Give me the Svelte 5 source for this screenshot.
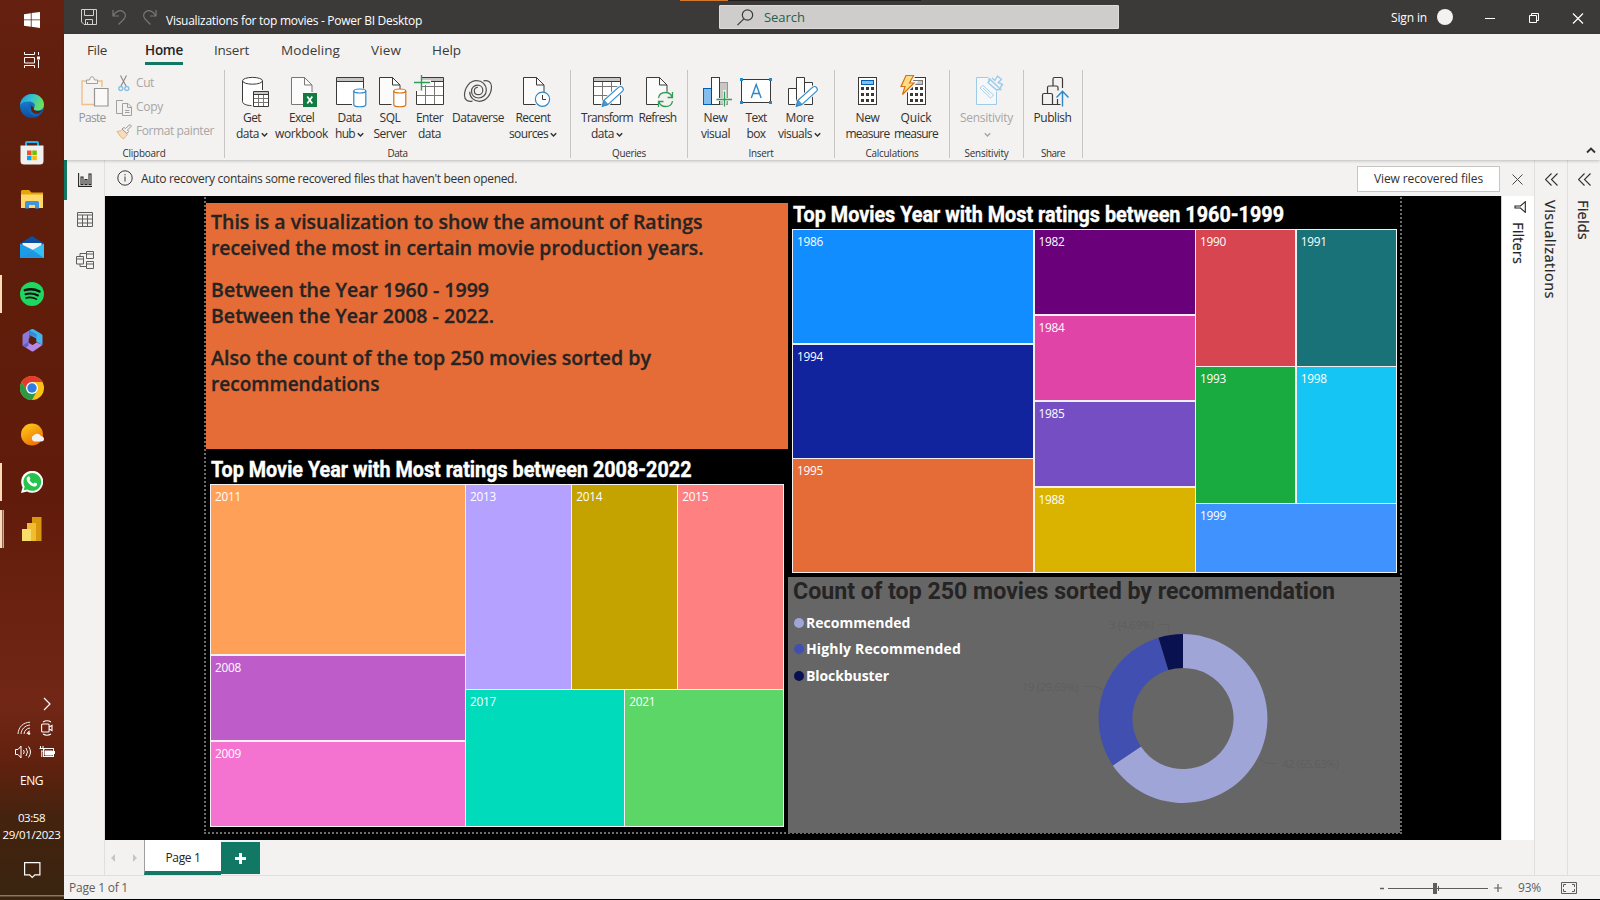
<script>
  const menu = [
    { name: 'File', x: 23, w: 20 },
    { name: 'Home', x: 38, w: 38, active: true },
    { name: 'Insert', x: 31, w: 35 },
    { name: 'Modeling', x: 32, w: 59 },
    { name: 'View', x: 31, w: 30 },
    { name: 'Help', x: 31, w: 29 }
  ];

  const groups = [
    { name: 'Data', lw: 20, pad: 4, width: 346, items: [
      { id: 'get', cx: 252, w: 46, lines: [['Get', 18], ['data', 23]], caret: true },
      { id: 'excel', cx: 302, w: 53, lines: [['Excel', 25], ['workbook', 53]] },
      { id: 'hub', cx: 350, w: 43, lines: [['Data', 24], ['hub', 20]], caret: true },
      { id: 'sql', cx: 390, w: 38, lines: [['SQL', 21], ['Server', 33]] },
      { id: 'enter', cx: 430, w: 41, lines: [['Enter', 27], ['data', 23]] },
      { id: 'dataverse', cx: 478, w: 56, lines: [['Dataverse', 52]] },
      { id: 'recent', cx: 533, w: 54, lines: [['Recent', 35], ['sources', 39]], caret: true }
    ] },
    { name: 'Queries', lw: 34, pad: 7, width: 117, items: [
      { id: 'transform', cx: 607, w: 58, lines: [['Transform', 52], ['data', 23]], caret: true },
      { id: 'refresh', cx: 658, w: 43, lines: [['Refresh', 38]] }
    ] },
    { name: 'Insert', lw: 25, pad: 9, width: 147, items: [
      { id: 'visual', cx: 716, w: 37, lines: [['New', 24], ['visual', 29]] },
      { id: 'textbox', cx: 756, w: 44, lines: [['Text', 21], ['box', 19]] },
      { id: 'more', cx: 800, w: 43, lines: [['More', 28], ['visuals', 34]], caret: true }
    ] },
    { name: 'Calculations', lw: 53, pad: 8, width: 115, items: [
      { id: 'measure', cx: 868, w: 49, lines: [['New', 24], ['measure', 44]] },
      { id: 'quick', cx: 916, w: 48, lines: [['Quick', 31], ['measure', 44]] }
    ] },
    { name: 'Sensitivity', lw: 44, pad: 10, width: 74, items: [
      { id: 'sensitivity', cx: 987, w: 53, lines: [['Sensitivity', 53], ['', 0]], caret: true, off: true }
    ] },
    { name: 'Share', lw: 24, pad: 8, width: 59, items: [
      { id: 'publish', cx: 1053, w: 41, lines: [['Publish', 38]] }
    ] }
  ];

  const modern = [
    { flex: 6, rows: [
      { flex: 1, cells: [['1986', '#118dff']] },
      { flex: 1, cells: [['1994', '#12239e']] },
      { flex: 1, cells: [['1995', '#e66c37']] }
    ] },
    { flex: 4, rows: [
      { flex: 1, cells: [['1982', '#6b007b']] },
      { flex: 1, cells: [['1984', '#e044a7']] },
      { flex: 1, cells: [['1985', '#744ec2']] },
      { flex: 1, cells: [['1988', '#d9b300']] }
    ] },
    { flex: 5, rows: [
      { flex: 2, cells: [['1990', '#d64550'], ['1991', '#197278']] },
      { flex: 2, cells: [['1993', '#1aab40'], ['1998', '#15c6f4']] },
      { flex: 1, cells: [['1999', '#4092ff']] }
    ] }
  ];
  const recent = [
    { flex: 4, rows: [
      { flex: 2, cells: [['2011', '#ffa058']] },
      { flex: 1, cells: [['2008', '#be5dc9']] },
      { flex: 1, cells: [['2009', '#f472d0']] }
    ] },
    { flex: 5, rows: [
      { flex: 3, cells: [['2013', '#b5a1ff'], ['2014', '#c4a200'], ['2015', '#ff8080']] },
      { flex: 2, cells: [['2017', '#00dbbc'], ['2021', '#5bd667']] }
    ] }
  ];

  const slices = [
    { name: 'Recommended', w: 104.5, value: 42, color: '#a0a5d8' },
    { name: 'Highly Recommended', w: 155, value: 19, color: '#414fb1' },
    { name: 'Blockbuster', w: 83, value: 3, color: '#0a1150' }
  ];
  const total = slices.reduce((s, d) => s + d.value, 0);
  function ringPath(index) {
    const start = slices.slice(0, index).reduce((s, d) => s + d.value, 0) / total;
    const end = start + slices[index].value / total;
    const at = (f, r) => `${Math.sin(f * 2 * Math.PI) * r} ${-Math.cos(f * 2 * Math.PI) * r}`;
    const big = end - start > 0.5 ? 1 : 0;
    return `M${at(start, 84.4)}A84.4 84.4 0 ${big} 1 ${at(end, 84.4)}L${at(end, 50.6)}A50.6 50.6 0 ${big} 0 ${at(start, 50.6)}Z`;
  }

  // Spaces the letters so that the text fills the given length along its writing direction.
  function track(node, length) {
    const box = node.getBoundingClientRect();
    const natural = getComputedStyle(node).writingMode === 'vertical-rl' ? box.height : box.width;
    node.style.letterSpacing = `${(length - natural) / node.textContent.length}px`;
  }
  // Condenses or widens the glyphs to the given width.
  function stretch(node, width) {
    const natural = node.getBoundingClientRect().width;
    node.style.transform = `scaleX(${width / natural})`;
  }
</script>

{#snippet T(text, w)}<span class="t" use:track={w}>{text}</span>{/snippet}

{#snippet caret()}<svg class="caret" width="7" height="6" viewBox="0 0 7 6"><path d="M.8 1.3 3.5 4 6.2 1.3" fill="none" stroke="currentColor" stroke-width="1.5" /></svg>{/snippet}

{#snippet doc(x, color)}
  <path d="M{x} 77.5h13l7.5 7.5v19.5h-20.5z" fill="#fff" opacity=".7" />
  <path d="M{x + 12} 104.5h-12v-27h13l7.5 7.5v7M{x + 13} 77.5v7.500h7.500" fill="none" stroke={color} />
{/snippet}

{#snippet drum(x, color)}
  <path d="M{x} 91v13.500c0 3 12 3 12 0v-13.500" fill="#fff" stroke={color} stroke-width="1.2" />
  <ellipse cx={x + 6} cy="91" rx="6" ry="2" fill="#fff" stroke={color} stroke-width="1.2" />
{/snippet}

{#snippet sheet(x)}
  <path d="M{x} 77.500h27v27h-27z" fill="#fff" stroke="none" />
  <path d="M{x} 77.500h27v4h-27z" fill="#c8c6c4" />
  <path d="M{x} 86.500h27M{x} 95.500h27M{x + 9} 81.500v23M{x + 18} 81.500v23" stroke="#797775" />
  <path d="M{x} 77.500h27v27h-27zM{x} 81.500h27" fill="none" stroke="#3b3a39" />
{/snippet}

{#snippet pencil(x)}
  <path d="M{x} 106.300l1.700-6 14.800-13.200q2.300-1.500 3.800.5t0 3.500l-14.800 13.500z" fill="#fff" stroke="#f3f2f1" stroke-width="3" />
  <path d="M{x} 106.300l1.700-6 14.800-13.200q2.300-1.500 3.800.5t0 3.500l-14.800 13.500z" fill="#fff" stroke="#2b88c8" stroke-width="1.100" />
  <path d="M{x} 106.300l1.700-6 4 4.200z" fill="#4a9ad4" stroke="#2b88c8" />
{/snippet}

{#snippet calc(x, quick)}
  <rect x={x} y="77.500" width="18" height="27" fill="#fff" stroke="#3b3a39" />
  <rect x={x + 3} y="80.500" width="12" height="4" fill={quick ? '#c8c6c4' : '#83beec'} stroke={quick ? '#797775' : '#005fb7'} />
  {#each [0, 1, 2] as r}
    {#each [0, 1, 2] as c}
      <rect x={x + 2.5 + c * 5} y={87 + r * 6} width="3" height="3" fill="#3b3a39" />
    {/each}
  {/each}
{/snippet}

{#snippet icon(id, cx)}
  <svg class="big" width="40" height="38" viewBox="{cx - 20} 72 40 38" fill="none">
    {#if id === 'get'}
      <path d="M242.500 81v20c0 3 4 4.500 10 4.500l10-14v-10.500" fill="#fff" />
      <ellipse cx="252.500" cy="80.800" rx="10" ry="3.400" fill="#fff" stroke="#3b3a39" />
      <path d="M242.500 81v20.500c0 2.500 4 4 9 4.100M262.500 81v9" stroke="#3b3a39" />
      <rect x="253.500" y="91.500" width="15" height="15" fill="#fff" />
      <path d="M253.500 91.500h15v3h-15z" fill="#c8c6c4" />
      <path d="M253.500 98.500h15M253.500 102.500h15M258.500 94.500v12M263.500 94.500v12" stroke="#797775" />
      <path d="M253.500 91.500h15v15h-15zM253.500 94.500h15" stroke="#3b3a39" />
    {:else if id === 'excel'}
      {@render doc(291.5, '#797775')}
      <rect x="303" y="93" width="14" height="14" fill="#107c41" />
      <path d="M307.300 96.500l5 7M312.300 96.500l-5 7" stroke="#fff" stroke-width="1.700" />
    {:else if id === 'hub'}
      <rect x="336.500" y="77.500" width="27" height="27" fill="#fff" />
      <path d="M336.500 77.500h27v4h-27z" fill="#c8c6c4" />
      <path d="M352 104.500h-15.500v-27h27v11M336.500 81.500h27" stroke="#3b3a39" />
      {@render drum(353.8, '#2b88c8')}
    {:else if id === 'sql'}
      {@render doc(379.5, '#3b3a39')}
      {@render drum(393.8, '#d87014')}
    {:else if id === 'enter'}
      {@render sheet(416.5)}
      <path d="M413 74h9v17h-9z" fill="#f3f2f1" /><path d="M413 80h18v5h-18z" fill="#f3f2f1" />
      <path d="M421.500 75v15.500M414 82.500h16" stroke="#2f9e56" stroke-width="1.400" />
    {:else if id === 'dataverse'}
      <path d="M472.500 101.200c-4.800.6-8-1.400-8-5.700 0-8.200 5.300-14.800 12-14.800 5.800 0 9.800 3.800 9.800 9.500 0 4.400-3.400 7.800-7.800 7.800-4 0-7-2.800-7-6.800 0-3.500 2.700-6 6-6s5.300 2.300 5.300 5-2 4.500-4.500 4.500-4-1.800-4-4 1.800-3.500 3.500-3.300M483.500 80.800c4.800-.6 8 1.400 8 5.700 0 8.200-5.300 14.800-12 14.800-5.800 0-9.800-3.800-9.800-9.500" stroke="#505050" stroke-width="1.200" />
    {:else if id === 'recent'}
      {@render doc(523.5, '#3b3a39')}
      <circle cx="542.500" cy="99.200" r="7.100" fill="#fff" stroke="#2b88c8" stroke-width="1.200" />
      <path d="M542.500 95v4.500h3.500" stroke="#3b3a39" />
    {:else if id === 'transform'}
      {@render sheet(593.5)}
      {@render pencil(602.3)}
    {:else if id === 'refresh'}
      {@render doc(646.5, '#3b3a39')}
      <circle cx="665.500" cy="99.500" r="8" fill="#f3f2f1" />
      <path d="M658.500 98c.5-3.500 3.500-5.500 7-5.500 3 0 5.500 1.500 6.500 4.500M672.500 101c-.5 3.500-3.500 5.500-7 5.500-3 0-5.500-1.500-6.500-4.500M672.500 92v5.500h-5M658.500 107v-5.500h5" stroke="#2f9e56" stroke-width="1.300" />
    {:else if id === 'visual'}
      <rect x="703.500" y="88.500" width="8" height="16" fill="#83beec" stroke="#005fb7" />
      <rect x="719.500" y="82.500" width="8" height="22" fill="#c8c6c4" stroke="#979593" />
      <rect x="711.500" y="77.500" width="8" height="27" fill="#fff" stroke="#3b3a39" />
      <path d="M724.500 90v16M716 99.500h16" stroke="#f3f2f1" stroke-width="3" />
      <path d="M724.500 91.500v15M716.500 99.500h15.500" stroke="#2f9e56" stroke-width="1.300" />
    {:else if id === 'textbox'}
      <rect x="741.500" y="79.500" width="29" height="23" fill="#fff" stroke="#3b3a39" />
      <path d="M751.300 98l4.900-13.500 4.900 13.500M753 93.500h6.500" stroke="#2b88c8" stroke-width="1.400" />
      {#each [[740, 78], [769, 78], [740, 101], [769, 101]] as p}
        <rect x={p[0]} y={p[1]} width="3" height="3" fill="#1e8bd4" />
      {/each}
    {:else if id === 'more'}
      <path d="M788.500 88.500h8v16h-8zM804.500 82.500h8v22h-8zM796.500 77.500h8v27h-8z" fill="#fff" stroke="#3b3a39" />
      {@render pencil(796.3)}
    {:else if id === 'measure'}
      {@render calc(858.5, false)}
    {:else if id === 'quick'}
      {@render calc(907.5, true)}
      <path d="M906 75.500h7.500l-4 7.500h4.500l-11.500 11.500 2.500-8h-4z" fill="#fde08a" stroke="#f3f2f1" stroke-width="4" />
      <path d="M906 75.500h7.500l-4 7.500h4.500l-11.500 11.500 2.500-8h-4z" fill="#fddc82" stroke="#d87014" stroke-width="1.200" />
    {:else if id === 'sensitivity'}
      <path d="M988 77.500h-11.500v27h20v-13" fill="#f5f7f9" stroke="#9fcbe6" />
      <path d="M980 88l3-2.500 10.500 9.500-3 3zM983 88l7.500 7" fill="#fff" stroke="#9fcbe6" />
      <path d="M989 78.500c1 2 0 3-1 4l8.500 7.500c1.500-.5 2.500-1 4.500-.5z" fill="#f3f7fa" stroke="#9fcbe6" stroke-width="1.600" stroke-linejoin="round" />
      <path d="M992 78l3 2.500 2.500-4.500 4 3.500-3.500 3 4.500 2-2.500 3.500" fill="#f3f7fa" stroke="#9fcbe6" stroke-width="1.400" stroke-linejoin="round" />
    {:else if id === 'publish'}
      <path d="M1042.500 104.500v-9.500q0-1.500 1.500-1.500h7q1.500 0 1.500 1.500v9.500zM1047.500 93.500v-6q0-1.500 1.500-1.500h7.500q1.500 0 1.500 1.500v3M1057.500 99v5M1053 86v-7q0-1.500 1.500-1.500h6.500q1.500 0 1.500 1.500v9M1052 104.500h8.500" stroke="#3b3a39" stroke-width="1.200" />
      <path d="M1062.500 106.500v-15M1056.500 97.500l6-6.200 6 6.200" stroke="#2b88c8" stroke-width="1.400" />
    {/if}
  </svg>
{/snippet}

{#snippet treemap(columns)}
  {#each columns as col}
    <div class="tcol" style="flex-grow:{col.flex}">
      {#each col.rows as row}
        <div class="trow" style="flex-grow:{row.flex}">
          {#each row.cells as cell}
            <div class="tile" style="background:{cell[1]}">{@render T(cell[0], 26)}</div>
          {/each}
        </div>
      {/each}
    </div>
  {/each}
{/snippet}

<div class="screen">
  <aside class="taskbar">
    <div class="slot start">
      <svg width="16" height="16" viewBox="0 0 16 16"><path d="M0 2.200 6.800 1.200v6.300H0zM7.600 1.100 16 0v7.500H7.600zM0 8.300h6.800v6.500L0 13.800zM7.600 8.300H16V16l-8.400-1.200z" fill="#fff" /></svg>
    </div>
    <div class="slot view">
      <svg width="16" height="16" viewBox="0 0 16 16" fill="none" stroke="#fff"><path d="M.5 0v2.500h10V0M.5 16v-2.500h10V16M.5 5.500h10v5.500H.500zM14.500 0v3M14.500 8v8" /><path d="M13 4.500h3v3h-3z" fill="#fff" stroke="none" /></svg>
    </div>
    <div class="slot">
      <svg width="24" height="24" viewBox="0 0 24 24">
        <defs>
          <linearGradient id="eg" x1="0" y1="0" x2="1" y2=".4"><stop offset="0" stop-color="#2390e0" /><stop offset=".5" stop-color="#35c1d0" /><stop offset="1" stop-color="#6be05a" /></linearGradient>
          <linearGradient id="eb" x1="0" y1="0" x2="0" y2="1"><stop offset="0" stop-color="#1c8fe0" /><stop offset="1" stop-color="#0d4d9c" /></linearGradient>
        </defs>
        <circle cx="12" cy="12" r="12" fill="url(#eb)" />
        <path d="M0 11C1 4 6 0 12 0c7 0 12 5 12 10.500 0 4-3 6-6.500 6-3 0-4.500-1-3.500-2.500 2.500-4-1-6.500-5-6.500-4 0-7.500 1-9 3.500z" fill="url(#eg)" />
        <path d="M14 14c-1 1.500.5 3 3.500 3 2 0 4-.5 5-1.300C20.500 19 17.500 20 15 19.500c-4-.7-6-5-3.500-8z" fill="#64200d" />
        <path d="M10 9c-3 3-2.500 9 2 12 2.500 1.500 5 1.500 8-.5-4 1-8-1-9-5-.5-2 0-4 1-5z" fill="#1668b5" />
      </svg>
    </div>
    <div class="slot">
      <svg width="24" height="24" viewBox="0 0 24 24"><path d="M6 5V1.800Q6 1 6.800 1h10.400q.8 0 .8.800V5" fill="none" stroke="#25b0f0" stroke-width="2" /><path d="M.5 4.500h23V20q0 3.500-3.500 3.500H4Q.5 23.500.5 20z" fill="#f0f0f0" /><path d="M7 9.500h4.500V14H7z" fill="#f25022" /><path d="M12.300 9.500h4.500V14h-4.500z" fill="#7fba00" /><path d="M7 14.700h4.500v4.500H7z" fill="#00a4ef" /><path d="M12.300 14.700h4.500v4.500h-4.500z" fill="#ffb900" /></svg>
    </div>
    <div class="slot">
      <svg width="22" height="20" viewBox="0 0 22 20"><path d="M0 1.500Q0 0 1.500 0H8l2.500 2.500H22V18H0z" fill="#e5a50a" /><path d="M0 4.500h22V18H0z" fill="#ffd868" /><path d="M4 18.500v-6q0-1.500 1.500-1.500h11q1.500 0 1.500 1.500v6h-4v-3.500H8v3.500z" fill="#3f95dc" /></svg>
    </div>
    <div class="slot">
      <svg width="24" height="22" viewBox="0 0 24 22"><path d="M0 7.500 12 0l12 7.500v2H0z" fill="#0b4fa0" /><path d="M2.500 7h19v9h-19z" fill="#f4f4f4" /><path d="M0 7.500 13 14 0 22z" fill="#1c9be6" /><path d="M24 7.500 12.500 14 0 22h24z" fill="#35c0f4" /><path d="M0 22l12.500-8L24 22z" fill="#1e96e4" /></svg>
    </div>
    <div class="slot run">
      <svg width="24" height="24" viewBox="0 0 24 24" fill="none" stroke="#111" stroke-linecap="round"><circle cx="12" cy="12" r="12" fill="#1ed760" stroke="none" /><path d="M4.800 8.200c5-1.500 10.500-1 14.800 1.300" stroke-width="2.400" /><path d="M5.500 12.200c4.300-1.200 8.700-.7 12.500 1.300" stroke-width="2" /><path d="M6 15.900c3.700-1 7.300-.5 10.500 1.200" stroke-width="1.600" /></svg>
    </div>
    <div class="slot">
      <svg width="21" height="23" viewBox="0 0 21 23"><path d="M7.500 1.300 1.500 4.700Q.5 5.300.5 6.500v10l3.500 2 3.500-3V8z" fill="#8b78d8" /><path d="M7.500 1.300 9.500.2q1-.4 2 .1l8 4.700q1 .5 1 1.700V16l-6.500-3.500v-3L7.500 6z" fill="#43b4ee" /><path d="M7.500 1.300V8l3-1.500 4 2.500V5z" fill="#2c6fc8" opacity=".6" /><path d="M.5 16.500l6-3.300 4 2.600 4-2.500 6 2.700-9 6.300q-1 .5-2 0z" fill="#b488e6" /><path d="M.5 16.500l6-3.500v3.500l-2.500 2.300z" fill="#3f55b8" opacity=".75" /><path d="M10.500 7.500l3.800 2.200v4L10.500 16l-3.800-2.300v-4z" fill="#5c1d0e" /></svg>
    </div>
    <div class="slot">
      <svg width="24" height="24" viewBox="0 0 24 24"><circle cx="12" cy="12" r="12" fill="#fbc116" /><path d="M12 6H22.400A12 12 0 0 0 1.600 6L7 15z" fill="#e33b2e" /><path d="M1.600 6 7 15l5 2.500L12 24A12 12 0 0 1 1.600 6z" fill="#2a9a48" /><path d="M12 24l5-9-5 3-3 5.600z" fill="#2a9a48" /><circle cx="12" cy="12" r="6" fill="#fff" /><circle cx="12" cy="12" r="4.700" fill="#2f7de1" /></svg>
    </div>
    <div class="slot">
      <svg width="24" height="23" viewBox="0 0 24 23"><defs><linearGradient id="sun" x1="0" y1="0" x2=".6" y2="1"><stop offset="0" stop-color="#ffd21a" /><stop offset="1" stop-color="#ee7208" /></linearGradient></defs><circle cx="12" cy="11.500" r="11" fill="url(#sun)" /><path d="M14 18.500a3.500 3.500 0 0 1 0-6.500 4.500 4.500 0 0 1 7 1q3 .500 3 3t-3 2.500z" fill="#f2f2f2" /></svg>
    </div>
    <div class="slot run">
      <svg width="22" height="22" viewBox="0 0 22 22"><path d="M0 22l1.600-5.800A11 11 0 1 1 6 20.500z" fill="#fff" /><path d="M2.700 19.300l1-3.700A8.900 8.900 0 1 1 6.400 18.400z" fill="#24c34b" /><path d="M7.300 5.500q.9-.4 1.300.4l.8 1.900-.9 1.500q1.200 2.300 3.900 3.500l1.300-1.400 2.500 1.200q.3 2-1.700 2.900c-3 .8-8.800-3.900-8.900-7.600q0-1.600 1.700-2.400z" fill="#fff" /></svg>
    </div>
    <div class="slot run on">
      <svg width="20" height="24" viewBox="0 0 20 24"><path d="M10 0h9.500v24H10z" fill="#d9960f" /><path d="M5 6h9v18H5z" fill="#f0bd2e" /><path d="M0 12h9v12H0z" fill="#f8de68" /></svg>
    </div>
    <div class="tray">
      <svg class="more" width="8" height="14" viewBox="0 0 8 14" fill="none" stroke="#fff" stroke-width="1.200"><path d="M1 1l6 6-6 6" /></svg>
      <div class="pair">
        <svg width="14" height="14" viewBox="0 0 14 14" fill="none" stroke="#eee"><path d="M1 13C1.500 6 6 1.500 13 1.200M4 13c.4-5 4-8.500 9-9M7 13c.3-3.200 2.700-5.700 6-6M10 13c.2-1.500 1.500-2.800 3-3" /><circle cx="12" cy="12.500" r="1.300" fill="#fff" stroke="none" /></svg>
        <svg width="12" height="16" viewBox="0 0 12 16" fill="none" stroke="#fff" stroke-width="1.100"><rect x=".6" y="4" width="7.500" height="8" rx="1" /><path d="M8 7l3-1.500v5L8 9M2 2q4-2.500 8 0M2 14q4 2.500 8 0" /></svg>
      </div>
      <div class="pair second">
        <svg width="17" height="14" viewBox="0 0 17 14" fill="none" stroke="#fff"><path d="M.5 4.500h2.500l3-3.500v12L3 9.500H.500zM8.500 5q1.500 2 0 4M11 3q3 4 0 8M13.500 1.500q4 5.500 0 11" /></svg>
        <svg width="17" height="12" viewBox="0 0 17 12" fill="none" stroke="#fff"><rect x="4.500" y="2.500" width="10" height="8" /><path d="M6 5h7.500v4H6z" fill="#fff" /><path d="M15.500 5v3M1.500 0v2.500M4 0v2.500M.5 2.500h4.500v2q-2 1.500-2.200 0V11" /></svg>
      </div>
      <div class="lang">{@render T('ENG', 23)}</div>
      <div class="clock">{@render T('03:58', 27)}</div>
      <div class="clock">{@render T('29/01/2023', 58)}</div>
      <svg class="note" width="17" height="17" viewBox="0 0 17 17" fill="none" stroke="#fff" stroke-width="1.200"><path d="M.6.6h15.300v12.200h-5L8.200 15.500l-2.600-2.700H.600z" /></svg>
    </div>
  </aside>

  <div class="app">
    <header class="titlebar">
      <div class="strip"></div>
      <div class="quickbar">
        <svg width="16" height="16" viewBox="0 0 16 16" fill="none" stroke="#d2d0ce"><path d="M.5.5h15v15H3L.500 13zM3.500.5v6h9v-6M4.500 15.500v-5h7v5M6.500 13v2.500" /></svg>
        <svg width="15" height="16" viewBox="0 0 15 16" fill="none" stroke="#797775" stroke-width="1.200"><path d="M1 1v6h6M1.300 6.500C4 2 8 .7 11 2.500c3 2 3 5 1 7.500L6.500 15.500" /></svg>
        <svg width="15" height="16" viewBox="0 0 15 16" fill="none" stroke="#797775" stroke-width="1.200"><path d="M14 1v6H8M13.700 6.500C11 2 7 .7 4 2.500c-3 2-3 5-1 7.500l5.500 5.500" /></svg>
      </div>
      <div class="doc-title">{@render T('Visualizations for top movies - Power BI Desktop', 256)}</div>
      <div class="search">
        <svg width="17" height="17" viewBox="0 0 17 17" fill="none" stroke="#3b3a39" stroke-width="1.200"><circle cx="10.500" cy="6" r="5.200" /><path d="M6.800 9.800.5 16.200" /></svg>
        {@render T('Search', 41)}
      </div>
      <div class="signin">{@render T('Sign in', 36)}</div>
      <div class="avatar"></div>
      <svg class="win" width="100" height="12" viewBox="0 0 100 12" fill="none" stroke="#fff"><path d="M1 6.500h10" /><path d="M45.500 3.500h7v7h-7zM47.500 3v-1.500h7v7H53" /><path d="M89 1.500l10 10M99 1.500l-10 10" stroke-width="1.200" /></svg>
    </header>

    <section class="ribbon">
      <nav class="menu">
        {#each menu as m}
          <div class="tab" class:active={m.active} style="margin-left:{m.x}px;width:{m.w}px">{@render T(m.name, m.w)}</div>
        {/each}
      </nav>
      <div class="groups">
        <div class="group clip">
          <div class="clip-body">
            <div class="paste">
              <svg width="28" height="31" viewBox="0 0 28 31" fill="none"><path d="M7 5H1v23.500h12M16 5h5v6" stroke="#f0c08a" stroke-width="1.400" /><path d="M5.500 7.500v-3.500h3Q9 .6 11 .6t2.500 3.400h3v3.500z" stroke="#a19f9d" fill="#f7f6f5" /><path d="M13.500 12.500h13.500v17.500H13.500z" fill="#faf9f8" stroke="#979593" stroke-width="1.200" /></svg>
              {@render T('Paste', 27)}
            </div>
            <div class="edits">
              <div class="edit"><svg width="16" height="17" viewBox="0 0 16 17" fill="none"><path d="M4.500.5l6 11.500M10.500.5l-6 11.500" stroke="#8a8886" stroke-width="1.100" /><circle cx="4.800" cy="13.500" r="2" stroke="#8ac0e2" stroke-width="1.400" /><circle cx="10.800" cy="13.500" r="2" stroke="#8ac0e2" stroke-width="1.400" /></svg>{@render T('Cut', 18)}</div>
              <div class="edit"><svg width="16" height="17" viewBox="0 0 16 17" fill="none" stroke="#a19f9d"><path d="M7 1.500H.500v13H6M6.500 4.500h5.500l3.500 3.500v8.500h-9zM11.500 4.500v4h4M9 11.500h4.500M9 13.500h4.500" /></svg>{@render T('Copy', 27)}</div>
              <div class="edit"><svg width="16" height="17" viewBox="0 0 16 17" fill="none"><path d="M1 8.500q3.500 0 5.500-2l5 5q-2 2-4 4.500-2.500-1-6.500-7.500z" fill="#f7dcc0" stroke="#eab47c" /><path d="M6 6l2-1.500 1.500 1L14 1.500l1.500 1.500-4 4 1 1.500-1.500 2z" fill="#f7f6f5" stroke="#979593" /></svg>{@render T('Format painter', 78)}</div>
            </div>
          </div>
          <div class="gname">{@render T('Clipboard', 43)}</div>
        </div>
        {#each groups as g}
          <div class="group" style="width:{g.width}px">
            <div class="items" style="padding-left:{g.pad}px">
              {#each g.items as it}
                <div class="item" class:off={it.off} style="width:{it.w}px">
                  {@render icon(it.id, it.cx)}
                  {#each it.lines as line, i}
                    <div class="line">
                      {#if line[0]}{@render T(line[0], line[1])}{/if}
                      {#if it.caret && i === it.lines.length - 1}{@render caret()}{/if}
                    </div>
                  {/each}
                </div>
              {/each}
            </div>
            <div class="gname">{@render T(g.name, g.lw)}</div>
          </div>
        {/each}
        <svg class="collapse" width="10" height="7" viewBox="0 0 10 7"><path d="M1 5.500 5 1.500l4 4" fill="none" stroke="#323130" stroke-width="1.800" /></svg>
      </div>
    </section>

    <div class="work">
      <nav class="rail">
        <svg width="14" height="14" viewBox="0 0 14 14" fill="none" stroke="#252423"><path d="M.6 0v13.400H14M3 4h2v7.500H3zM7 6.500h2v5H7zM11 1h2v10.500h-2z" stroke-width="1.100" /></svg>
        <svg width="16" height="15" viewBox="0 0 16 15" fill="none" stroke="#605e5c"><path d="M.5.500h15v14H.500zM.5 3h15M.5 7h15M.5 11h15M5.500 3v11.500M10.500 3v11.500" /></svg>
        <svg width="18" height="18" viewBox="0 0 18 18" fill="none" stroke="#605e5c"><path d="M.5 5.500h7v7.500h-7zM.5 8h7M10.500.500h7v7h-7zM10.500 3h7M10.500 10.500h7v7h-7zM10.500 13h7M4 5.500v-3h6.500M4 13v2.500h6.500" /></svg>
      </nav>

      <div class="center">
        <div class="info">
          <svg width="16" height="16" viewBox="0 0 16 16" fill="none" stroke="#3b3a39"><circle cx="8" cy="8" r="7.200" /><path d="M8 6.500v5M8 4v1.300" /></svg>
          <div class="msg">{@render T("Auto recovery contains some recovered files that haven't been opened.", 376)}</div>
          <button>{@render T('View recovered files', 109)}</button>
          <svg class="x" width="11" height="11" viewBox="0 0 11 11" fill="none" stroke="#484644"><path d="M.5.500l10 10M10.500.500l-10 10" /></svg>
        </div>
        <div class="stage">
          <div class="canvas">
            <div class="report">
              <div class="note-box">
                <p><span use:stretch={491.5}>This is a visualization to show the amount of Ratings</span><span use:stretch={492.5}>received the most in certain movie production years.</span></p>
                <p><span use:stretch={278}>Between the Year 1960 - 1999</span><span use:stretch={283}>Between the Year 2008 - 2022.</span></p>
                <p><span use:stretch={440}>Also the count of the top 250 movies sorted by</span><span use:stretch={168.5}>recommendations</span></p>
              </div>
              <div class="visual v1">
                <h2><span use:stretch={491}>Top Movies Year with Most ratings between 1960-1999</span></h2>
                <div class="map">{@render treemap(modern)}</div>
              </div>
              <div class="visual v2">
                <h2><span use:stretch={480.5}>Top Movie Year with Most ratings between 2008-2022</span></h2>
                <div class="map">{@render treemap(recent)}</div>
              </div>
              <div class="donut">
                <h3><span use:stretch={542}>Count of top 250 movies sorted by recommendation</span></h3>
                <div class="donut-body">
                  <ul>
                    {#each slices as s}
                      <li><i style="background:{s.color}"></i>{@render T(s.name, s.w)}</li>
                    {/each}
                  </ul>
                  <svg width="340" height="220" viewBox="-175 -108.500 340 220">
                    {#each slices as s, i}
                      <path d={ringPath(i)} fill={s.color} />
                    {/each}
                    <g class="callouts">
                      <text x="-74" y="-89.500" textLength="45">3 (4.69%)</text>
                      <text x="-161" y="-27.500" textLength="57">19 (29.69%)</text>
                      <text x="99" y="49.500" textLength="57">42 (65.63%)</text>
                      <path d="M-25-94h11v9M-99-32h10l9 3M77 41l7 4h10" fill="none" stroke="#61605f" />
                    </g>
                  </svg>
                </div>
              </div>
            </div>
          </div>
          <aside class="filters">
            <svg width="12" height="12" viewBox="0 0 12 12" fill="none" stroke="#252423" stroke-width="1.100"><path d="M11.300.7v10.600L6.500 7H1V5h5.500z" /></svg>
            <div class="vert">{@render T('Filters', 42)}</div>
          </aside>
        </div>
        <footer class="pages">
          <svg width="26" height="8" viewBox="0 0 26 8" fill="#c8c6c4"><path d="M4 0v8L0 4zM22 0v8l4-4z" /></svg>
          <div class="page-tab">{@render T('Page 1', 35)}</div>
          <div class="add"><svg width="11" height="11" viewBox="0 0 11 11"><path d="M5.500 0v11M0 5.500h11" stroke="#fff" stroke-width="3" /></svg></div>
        </footer>
      </div>

      {#each [['Visualizations', 99], ['Fields', 40]] as pane}
        <aside class="pane">
          <svg width="13" height="13" viewBox="0 0 13 13" fill="none" stroke="#323130" stroke-width="1.100"><path d="M6.500.5l-6 6 6 6M12.500.5l-6 6 6 6" /></svg>
          <div class="vert">{@render T(pane[0], pane[1])}</div>
        </aside>
      {/each}
    </div>

    <footer class="status">
      <div class="count">{@render T('Page 1 of 1', 59)}</div>
      <svg width="118" height="14" viewBox="0 0 118 14" fill="none" stroke="#605e5c"><path d="M0 7.500h4" stroke-width="1.500" /><path d="M8 7.500h100M58.500 5v5" /><path d="M53 2h4v11h-4z" fill="#605e5c" stroke="none" /></svg>
      <svg class="plus" width="8" height="8" viewBox="0 0 8 8"><path d="M4 0v8M0 4h8" stroke="#605e5c" stroke-width="1.200" /></svg>
      <div class="pct">{@render T('93%', 23)}</div>
      <svg width="16" height="12" viewBox="0 0 16 12" fill="none" stroke="#605e5c"><path d="M.5.500h15v11H.500zM2.500 5V2.500H5M11 2.500h2.500V5M2.500 7v2.500H5M11 9.500h2.500V7" /></svg>
    </footer>
  </div>
</div>

<style>
  :global(body) { margin: 0; background: #000; overflow: hidden; }
  .screen { width: 1600px; height: 900px; display: flex; font: 12px/16px 'Open Sans', 'Noto Sans', sans-serif; color: #323130; overflow: hidden; }
  svg { display: block; flex: none; }
  .t { display: inline-block; white-space: nowrap; flex: none; }

  .taskbar { width: 64px; height: 900px; flex: none; display: flex; flex-direction: column; color: #fff; background: linear-gradient(#65200f 0, #5e1e0b 25%, #611b0a 55%, #722716 78%, #64210f 84%, #43230e 91%, #3a2410 99.4%, #8b7668 99.5%, #3a2410 99.7%); }
  .slot { height: 47px; display: flex; align-items: center; justify-content: center; box-sizing: border-box; flex: none; }
  .slot.start { height: 40px; }
  .slot.view { height: 42px; padding-bottom: 3px; }
  .slot.run { background: linear-gradient(#ffdcb8, #ffdcb8) 0 50% / 2px 38px no-repeat; }
  .slot.run.on { background: linear-gradient(90deg, #ffdcb8 2px, #8c6a55 2px 3px, #cfa98c 3px) 0 50% / 4px 38px no-repeat; }
  .tray { margin-top: auto; height: 203px; display: flex; flex-direction: column; align-items: center; flex: none; }
  .tray .more { margin-left: 30px; }
  .pair { width: 64px; display: flex; align-items: center; height: 16px; margin-top: 9px; padding-left: 17px; box-sizing: border-box; gap: 10px; }
  .pair.second { height: 14px; padding-left: 15px; gap: 7px; }
  .lang { margin-top: 14px; font-size: 12px; margin-right: 1px; }
  .clock { line-height: 17px; font-size: 11.500px; margin-right: 1px; }
  .lang + .clock { margin-top: 20px; }
  .note { margin-top: 19px; }

  .app { width: 1536px; display: flex; flex-direction: column; height: 899px; }
  .titlebar { height: 34px; flex: none; background: #3b3a38; color: #fff; display: flex; align-items: center; position: relative; }
  .strip { position: absolute; left: 616px; top: 0; width: 241px; height: 1px; background: linear-gradient(90deg, #d2782d 48px, #201f1e 48px); }
  .quickbar { display: flex; gap: 15px; margin-left: 17px; width: 85px; }
  .doc-title { width: 553px; padding-top: 7px; font-size: 12px; box-sizing: border-box; }
  .search { width: 400px; height: 24px; box-sizing: border-box; background: #cfcdcb; border: 1px solid #dedcda; border-radius: 1px; color: #1f5f50; display: flex; align-items: center; gap: 10px; padding-left: 17px; font-size: 13px; }
  .signin { margin-left: 272px; width: 46px; padding-top: 1px; }
  .avatar { width: 16px; height: 16px; border-radius: 50%; background: #f3f2f1; }
  .win { margin-left: 31px; margin-top: 2px; }

  .ribbon { height: 126px; flex: none; background: #f3f2f1; box-shadow: 0 1px 3px rgba(0, 0, 0, .22); position: relative; z-index: 1; }
  .menu { display: flex; height: 36px; }
  .tab { height: 28px; line-height: 32px; font-size: 13.500px; color: #3b3a39; flex: none; }
  .tab.active { font-weight: 600; color: #252423; box-shadow: 0 3px 0 #117865; }
  .menu .t { vertical-align: top; }
  .groups { display: flex; height: 88px; }
  .group { box-sizing: border-box; border-right: 1px solid #c8c6c4; display: flex; flex-direction: column; align-items: stretch; flex: none; height: 88px; }
  .clip { width: 161px; }
  .clip-body { display: flex; height: 76px; color: #a8a6a4; font-size: 12px; flex: none; }
  .paste { width: 48px; margin-left: 4px; padding: 6px 0 0 0; display: flex; flex-direction: column; align-items: center; gap: 3px; box-sizing: border-box; color: #979593; }
  .paste svg { margin-left: 5px; }
  .edits { display: flex; flex-direction: column; padding-top: 1px; }
  .edit { height: 24px; display: flex; align-items: center; gap: 4px; }
  .items { display: flex; height: 76px; flex: none; }
  .item { display: flex; flex-direction: column; align-items: center; flex: none; padding-top: 2px; box-sizing: border-box; }
  .line { height: 16px; display: flex; align-items: center; justify-content: center; }
  .off { color: #a8a6a4; }
  .caret { margin: 2px 0 0 2px; }
  .gname { text-align: center; font-size: 9.900px; line-height: 14px; height: 14px; }
  .gname .t { vertical-align: top; }
  .collapse { margin-left: auto; margin-top: 77px; margin-right: 4px; }

  .work { display: flex; flex: 1; min-height: 0; background: #f3f2f1; }
  .rail { width: 41px; box-sizing: border-box; border-right: 1px solid #e1dfdd; display: flex; flex-direction: column; align-items: center; padding: 13px 0 0 2px; flex: none; background: linear-gradient(#117865, #117865) 0 0 / 3px 40px no-repeat; }
  .rail svg:nth-child(2) { margin-top: 25px; }
  .rail svg:nth-child(3) { margin-top: 24px; }
  .center { width: 1429px; display: flex; flex-direction: column; flex: none; }
  .info { height: 36px; flex: none; display: flex; align-items: center; padding-left: 12px; }
  .info > svg:first-child { margin-top: -1px; }
  .msg { margin-left: 8px; padding-top: 2px; }
  .info button { margin: 1px 0 0 auto; width: 143px; height: 26px; padding: 0; background: #fff; border: 1px solid #c8c6c4; font: inherit; color: #323130; display: flex; justify-content: center; align-items: center; }
  .info .x { margin: 2px 11px 0 12px; }
  .stage { height: 644px; display: flex; flex: none; }
  .canvas { width: 1396px; background: #000; position: relative; overflow: hidden; flex: none; }
  .filters { width: 33px; background: #fff; border-left: 1px solid #d2d0ce; box-sizing: border-box; display: flex; flex-direction: column; align-items: center; padding-top: 5px; }
  .filters svg { margin-left: 4px; }
  .vert { writing-mode: vertical-rl; font-size: 14.500px; line-height: 18px; color: #252423; -webkit-text-stroke: .2px #252423; }
  .filters .vert { margin-top: 9px; }
  .pane { width: 33px; box-sizing: border-box; border-left: 1px solid #e1dfdd; display: flex; flex-direction: column; align-items: center; padding-top: 13px; flex: none; }
  .pane .vert { margin-top: 14px; margin-right: 2px; }

  .report { position: absolute; left: 99px; top: -6px; width: 1194px; height: 640px; border: 2px dotted #6c6c6c; }
  .note-box { position: absolute; left: 0; top: 11px; width: 577px; height: 240px; padding: 6px 0 0 5px; background: #e66c37; color: #252423; font: 600 18.900px/26.300px 'Open Sans', 'Noto Sans', sans-serif; -webkit-text-stroke: .3px #252423; }
  .note-box p { margin: 0 0 15.300px; }
  .note-box span { display: table; white-space: nowrap; transform-origin: 0 0; }
  .visual { position: absolute; display: flex; flex-direction: column; }
  .v1 { left: 586px; top: 12px; width: 605px; height: 369px; }
  .v2 { left: 4px; top: 267px; width: 574px; height: 368px; }
  h2, h3 { margin: 0; font: 700 21.500px/22px Roboto, sans-serif; color: #fff; height: 25px; white-space: nowrap; padding-left: 1px; flex: none; box-sizing: border-box; -webkit-text-stroke: .4px currentColor; }
  h2 span, h3 span { display: inline-block; transform-origin: 0 0; }
  .map { flex: 1; display: flex; gap: 1.500px; background: #f4f0f2; padding: 1px; min-height: 0; }
  .tcol { flex: 1 1 0; display: flex; flex-direction: column; gap: 1.500px; min-width: 0; }
  .trow { flex: 1 1 0; display: flex; gap: 1.500px; min-height: 0; }
  .tile { flex: 1 1 0; color: #fff; font-size: 11.800px; line-height: 16px; padding: 3px 0 0 4px; box-sizing: border-box; min-width: 0; }
  .donut { position: absolute; left: 582px; top: 385px; width: 612px; height: 256px; background: #666; }
  h3 { color: #252423; font-size: 24.500px; line-height: 28px; height: 33px; padding-left: 5px; -webkit-text-stroke: 0; }
  .donut-body { display: flex; }
  ul { list-style: none; margin: 0; padding: 0 0 0 6px; width: 220px; font: 700 14px/26px 'Open Sans', 'Noto Sans', sans-serif; color: #fff; box-sizing: border-box; }
  li { display: flex; align-items: center; height: 26.300px; gap: 2px; }
  li i { width: 10px; height: 10px; border-radius: 50%; }
  .callouts text { font-size: 11.500px; fill: #5f5e5d; }

  .pages { height: 35px; display: flex; flex: none; }
  .pages > svg { margin: 14px 7px 0 6px; }
  .page-tab { width: 77px; height: 35px; box-sizing: border-box; background: #fff; border-bottom: 4px solid #117865; border-left: 1px solid #a19f9d; display: flex; justify-content: center; align-items: center; color: #252423; font-weight: 500; padding-top: 4px; }
  .add { width: 39px; height: 32px; margin-top: 2px; background: #117865; display: flex; align-items: center; justify-content: center; }
  .status { height: 24px; flex: none; background: #f3f2f1; border-top: 1px solid #e1dfdd; box-sizing: border-box; display: flex; align-items: center; color: #605e5c; }
  .count { margin-left: 5px; width: 1311px; padding-top: 1px; }
  .status .plus { margin-left: -4px; }
  .pct { margin: 0 20px 0 16px; padding-top: 1px; }
</style>
